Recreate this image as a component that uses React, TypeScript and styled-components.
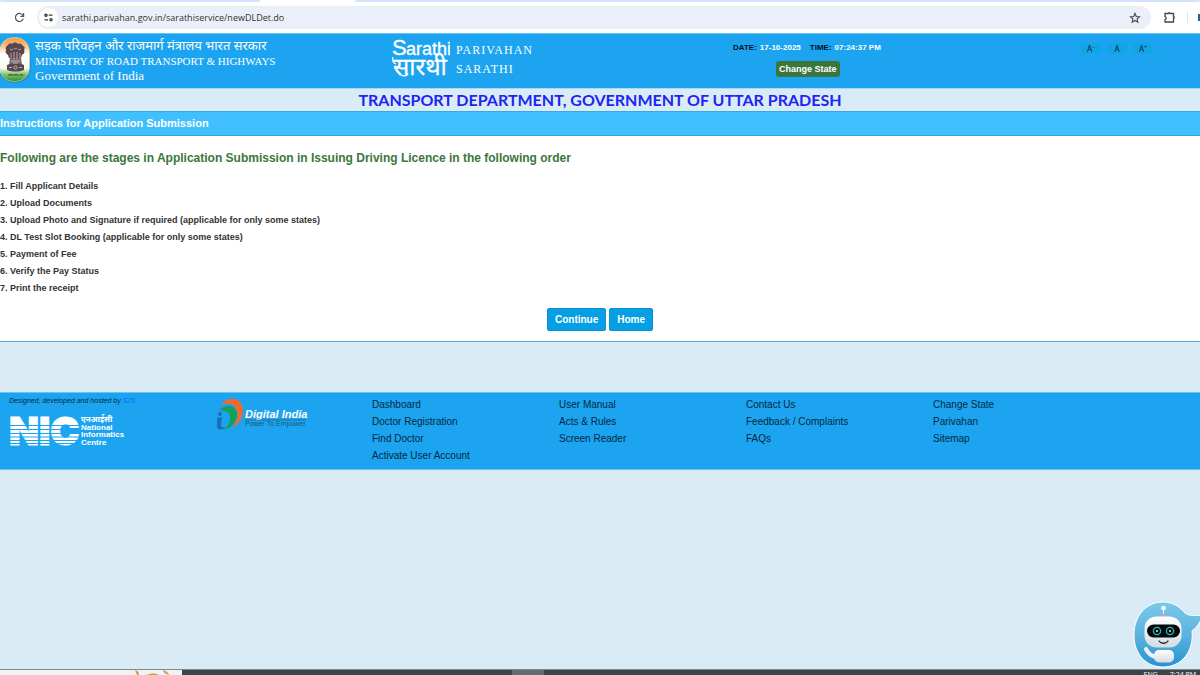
import React from "react";
import styled, { createGlobalStyle } from "styled-components";

const sans = `"Liberation Sans", Arial, sans-serif`;
const serif = `"Liberation Serif", "Times New Roman", serif`;

const Global = createGlobalStyle`
  *, *::before, *::after { box-sizing: border-box; }
  body { margin: 0; font-family: ${sans}; background: #d9ecf5; color: #333; }
  ul, ol, dl, dd, h1, h2, p { margin: 0; padding: 0; list-style: none; }
  a { color: inherit; text-decoration: none; }
  button { font: inherit; border: 0; cursor: pointer; }
  svg { display: block; }
`;

const Page = styled.div`
  display: flex;
  flex-direction: column;
  min-height: 100vh;
`;

/* Browser frame */
const TabStrip = styled.div`
  display: grid;
  grid-template-columns: 260fr 95fr 845fr;
  height: 2px;
  background: #fff;
`;
const TabEdge = styled.div<{ $active?: boolean }>`
  background: ${(p) => (p.$active ? "#fff" : "#d3e3fd")};
  border-radius: 0 0 3px 3px;
`;
const Toolbar = styled.div`
  display: flex;
  align-items: center;
  height: 31px;
  padding-left: 14px;
  background: #fff;
  overflow: hidden;
`;
const IconButton = styled.button`
  display: flex;
  flex: none;
  padding: 0;
  background: none;
`;
const AddressBar = styled.form`
  display: flex;
  flex: 1;
  align-items: center;
  gap: 4px;
  height: 23px;
  margin: 0 12px;
  padding: 0 10px 0 2px;
  border-radius: 12px;
  background: #ebeff9;
`;
const SiteInfo = styled(IconButton)`
  padding: 4px;
  border-radius: 50%;
  background: #fff;
`;
const AddressInput = styled.input`
  flex: 1;
  min-width: 0;
  padding: 0;
  border: 0;
  outline: 0;
  background: none;
  font: 9px/16px "Open Sans", "Noto Sans", sans-serif;
  color: #333;
`;
const ToolbarRule = styled.span`
  width: 1px;
  height: 11px;
  margin: 0 10px 0 11px;
  background: #d3e3fd;
`;
const ProfileDot = styled.span`
  width: 2px;
  height: 7px;
  background: #2b5f98;
`;

/* Site header */
const Header = styled.header`
  display: grid;
  grid-template-columns: 391fr 342fr 348fr 119fr;
  height: 55px;
  border-top: 1px solid #69c3f4;
  background: #1ca4f0;
`;
const Ministry = styled.div`
  display: flex;
  gap: 4px;
  padding-top: 3px;
`;
const MinistryText = styled.div`
  color: #fff;
  font: 11px/14px ${serif};
  white-space: nowrap;
`;
const HindiLine = styled.p`
  font: 13px/17px "Noto Sans", "Noto Sans Devanagari", "Lohit Devanagari", sans-serif;
`;
const GovLine = styled.p`
  font-size: 13px;
  line-height: 15px;
`;
const Brand = styled.div`
  display: flex;
  gap: 6px;
  padding-top: 3px;
`;
const BrandText = styled.div`
  padding-top: 4px;
  color: #fff;
  font: 12px/19px ${serif};
  letter-spacing: 1px;
`;
const Session = styled.div`
  display: flex;
  flex-direction: column;
  align-items: flex-start;
  padding-top: 8px;
  font-size: 8px;
  line-height: 11px;
  font-weight: 700;
`;
const Stamps = styled.dl`
  display: flex;
  gap: 9px;
`;
const Stamp = styled.div`
  display: flex;
  gap: 3px;
  color: #00131f;
`;
const StampValue = styled.dd`
  color: #fff;
`;
const ChangeState = styled.button`
  margin: 8px 0 0 43px;
  padding: 3px 3px 2px;
  border-radius: 3px;
  background: #3c763d;
  color: #fff;
  font-size: 9px;
  line-height: 11px;
`;
const FontSizes = styled.div`
  display: flex;
  align-items: flex-start;
  gap: 6px;
  padding-top: 9px;
`;
const FontSizeButton = styled.button`
  height: 11px;
  min-width: 20px;
  padding: 0 4px;
  border-radius: 3px;
  background: #12a5e6;
  color: #08243a;
  font: 8px/11px "Noto Sans", sans-serif;
`;

const Department = styled.h1`
  height: 23px;
  border-top: 1px solid #a5d9f5;
  color: #1f24f2;
  font: 700 16px/22px Lato, "Open Sans", sans-serif;
  text-align: center;
`;
const SectionBar = styled.h2`
  height: 25px;
  border-top: 1px solid #36a9ea;
  border-bottom: 1px solid #2fa6e2;
  background: #40c0ff;
  color: #fff;
  font-size: 11px;
  line-height: 23px;
`;
const Content = styled.main`
  padding: 14px 0 10px;
  border-bottom: 1px solid #45b1e4;
  background: #fff;
`;
const Lead = styled.p`
  color: #3c763d;
  font-size: 12px;
  line-height: 16px;
  font-weight: 700;
`;
const Stages = styled.ol`
  margin-top: 12px;
  font-size: 9px;
  line-height: 17px;
  font-weight: 700;
`;
const Actions = styled.div`
  display: flex;
  justify-content: center;
  gap: 3px;
  margin-top: 11px;
`;
const ActionButton = styled.button`
  padding: 6px 7px;
  border: 1px solid #0a92d3;
  border-radius: 2px;
  background: #079fe3;
  color: #fff;
  font-size: 10px;
  line-height: 9px;
  font-weight: 700;
`;

/* Footer */
const Footer = styled.footer`
  display: grid;
  grid-template-columns: 207fr 156fr 187fr 187fr 187fr 267fr;
  margin-top: 50px;
  padding: 3px 0 5px 9px;
  border-top: 1px solid #69c3f4;
  border-bottom: 1px solid #69c3f4;
  background: #1ca4f0;
`;
const Host = styled.div`
  display: grid;
  align-content: start;
  gap: 6px;
`;
const HostNote = styled.p`
  color: #03293f;
  font-size: 7px;
  line-height: 10px;
  font-style: italic;
`;
const HostLink = styled.a`
  color: #0d6bff;
`;
const FooterLinks = styled.ul`
  color: #03293f;
  font-size: 10px;
  line-height: 17px;
`;

const Chat = styled.button`
  position: fixed;
  right: 0;
  bottom: 5px;
  padding: 0;
  background: none;
`;
const Taskbar = styled.div`
  display: grid;
  grid-template-columns: 182fr 330fr 32fr 656fr;
  height: 6px;
  margin-top: auto;
  border-top: 1px solid #7d898b;
  background: #3b4547;
  overflow: hidden;
`;
const SearchBox = styled.div`
  padding-left: 135px;
  background: #f2f2f2;
`;
const ActiveTask = styled.div`
  grid-column: 3;
  background: #666b6d;
`;
const Tray = styled.div`
  display: flex;
  justify-content: flex-end;
  gap: 12px;
  padding-right: 4px;
  color: #fff;
  font: 7px/9px "Open Sans", sans-serif;
  white-space: nowrap;
`;

const ReloadIcon = () => (
  <svg width="11" height="11" viewBox="0 0 11 11" fill="none" stroke="#555" strokeWidth="1.2">
    <path d="M9 3.6A4 4 0 1 0 9.3 6.6" />
    <path d="M9.6 1v3.3H6.3" />
  </svg>
);
const TuneIcon = () => (
  <svg width="11" height="11" viewBox="0 0 11 11" fill="none" stroke="#3a3a3a" strokeWidth="1.3">
    <circle cx="3" cy="3.2" r="1.1" />
    <path d="M5.8 3.2H9.5M1.500 7.8h3.500" />
    <circle cx="8" cy="7.8" r="1.1" />
  </svg>
);
const StarIcon = () => (
  <svg width="12" height="12" viewBox="0 0 12 12" fill="none" stroke="#454545" strokeWidth="1.1">
    <path d="M6 1.500l1.300 3 3.200.3-2.400 2.200.7 3.200L6 8.500l-2.800 1.700.7-3.200L1.500 4.800l3.200-.3z" />
  </svg>
);
const ExtensionIcon = () => (
  <svg width="13" height="13" viewBox="0 0 13 13" fill="none" stroke="#454545" strokeWidth="1.300">
    <path d="M2 2.500h3.200c0-1.200 1.800-1.200 1.800 0H10.500v3c1 0 1 1.900 0 1.900v3.600H2V8.600c1.600-.2 1.600-2.700 0-2.900z" />
  </svg>
);

const Emblem = () => (
  <svg width="31" height="46" viewBox="0 0 31 46" role="img" aria-label="State Emblem of India">
    <defs>
      <linearGradient id="flag" x1="0" y1="0" x2="0" y2="1">
        <stop offset="0" stopColor="#f6973a" />
        <stop offset=".2" stopColor="#f9c48c" />
        <stop offset=".38" stopColor="#fff" />
        <stop offset=".7" stopColor="#f4faf0" />
        <stop offset=".84" stopColor="#7fc368" />
        <stop offset="1" stopColor="#249333" />
      </linearGradient>
    </defs>
    <rect x="-1" y="1" width="31.500" height="44.500" rx="14" fill="#2a6c8a" opacity=".6" />
    <rect x="-.5" y=".5" width="30" height="44" rx="14" fill="url(#flag)" stroke="#e8dfa9" strokeWidth=".6" />
    <g fill="#59464f">
      <path d="M8 8c1-2 3-2 4-1 1-2 5-2 6 0 2-1 4 0 5 2 2 0 2 3 1 4 1 2 0 4-2 5l-1 3H9l-1-3c-2-1-3-3-2-5-1-2 0-4 2-5z" />
      <path d="M10 21h11l1 7H9z" opacity=".8" />
      <path d="M7 28c5-2 12-2 17 0v5c-5 2-12 2-17 0z" />
      <path d="M8 37.500l3-.6 2 .8 3-.8 3 .8 4-.6v1.300H8z" />
    </g>
    <g stroke="#e5d6cc" strokeWidth=".7" fill="none">
      <path d="M10 12c1 1 2 1 3 0M14 11c1 1 2 1 3 0M18 12c1 1 2 1 3 0M11 16v5M14 15v7M17 15v7M20 16v5M11 24h9M13 26h5" />
      <circle cx="15.500" cy="30.500" r="1.600" />
      <path d="M9 30.500h3M19 30.500h3" />
    </g>
  </svg>
);

const SarathiLogo = () => (
  <svg width="59" height="44" viewBox="0 0 59 44" fill="#fff" stroke="#fff" strokeWidth=".3" role="img" aria-label="Sarathi">
    <text x="1" y="18" fontFamily="Liberation Sans" fontSize="22">S</text>
    <text x="15" y="18" fontFamily="Liberation Sans" fontSize="18">arathi</text>
    <text x="2" y="38" fontFamily="Noto Sans, Noto Sans Devanagari, sans-serif" fontSize="24">सारथी</text>
    <path d="M2 20c-1 3 0 6 3 7M8 35c2 5 8 5 9 1" fill="none" strokeWidth="1.200" />
  </svg>
);

const NicLogo = () => (
  <svg width="122" height="36" viewBox="0 0 122 36" fill="#fff" role="img" aria-label="National Informatics Centre">
    <text x="0" y="33" fontFamily="Inter, Liberation Sans" fontWeight="900" fontSize="39" stroke="#fff" strokeWidth="1">NIC</text>
    <path d="M0 13.500h70M0 17.500h70M0 21.500h70M0 25h70M0 28.500h70M0 31.500h70" stroke="#1ca4f0" strokeWidth="1" />
    <g fontFamily="Liberation Sans" fontWeight="700" fontSize="8">
      <text x="72" y="10" fontFamily="Noto Sans, Noto Sans Devanagari, sans-serif">एनआईसी</text>
      <text x="72" y="18">National</text>
      <text x="72" y="25">Informatics</text>
      <text x="72" y="33">Centre</text>
    </g>
  </svg>
);

const DigitalIndiaLogo = () => (
  <svg width="94" height="37" viewBox="0 -2 94 37" role="img" aria-label="Digital India, Power To Empower">
    <path d="M5 7C11-2 26-2 27 12c0 9-5 15-11 18 5-6 7-12 5-17C19 6 13 4 5 7z" fill="#f26a2b" />
    <path d="M3 13c5-7 17-7 18 3 0 8-6 15-14 16 5-3 7-8 7-12 0-6-5-9-11-7z" fill="#14a05a" />
    <circle cx="4" cy="16" r="2" fill="#1b6fb8" />
    <path d="M1 20l5-1-1 8c0 2 2 3 5 2-4 4-10 3-9-2z" fill="#1b6fb8" />
    <text x="29" y="20" fill="#fff" fontFamily="Liberation Sans" fontStyle="italic" fontWeight="700" fontSize="11">Digital India</text>
    <path d="M29 22h61" stroke="#385b70" strokeWidth=".8" />
    <text x="29" y="28" fill="#19577c" fontFamily="Liberation Sans" fontSize="7">Power To Empower</text>
  </svg>
);

const Robot = () => (
  <svg width="67" height="70" viewBox="0 0 67 70">
    <defs>
      <linearGradient id="bubble" x1="0" y1="0" x2="0" y2="1">
        <stop offset="0" stopColor="#7cc8ea" />
        <stop offset=".5" stopColor="#5bb4df" />
        <stop offset="1" stopColor="#2593d2" />
      </linearGradient>
      <linearGradient id="shell" x1="0" y1="0" x2="0" y2="1">
        <stop offset="0" stopColor="#fff" />
        <stop offset="1" stopColor="#d5dbe3" />
      </linearGradient>
    </defs>
    <path d="M30 2c9 0 16 4 21 10 4 4 9 4 18 3-1 7-5 12-10 16 2 20-10 36-29 36C12 67 1 53 1 35S12 2 30 2z" fill="url(#bubble)" stroke="#fff" strokeWidth="1" />
    <path d="M30.500 8v7" stroke="#eef4f8" strokeWidth="1" />
    <circle cx="30.500" cy="8" r="2.300" fill="#fff" />
    <path d="M26 17c0-4 9-4 9 0z" fill="#a4b1bd" />
    <rect x="11.500" y="16.500" width="37" height="31" rx="12" fill="url(#shell)" />
    <rect x="14" y="24.500" width="33" height="13" rx="6.500" fill="#05090d" />
    <g fill="none" stroke="#29b8b5" strokeWidth="1.300">
      <circle cx="24" cy="31" r="3.600" /><circle cx="37" cy="31" r="3.600" />
    </g>
    <circle cx="24" cy="31" r="1" fill="#9ff" /><circle cx="37" cy="31" r="1" fill="#9ff" />
    <path d="M26 41c2 3 7 3 9 0" fill="none" stroke="#222" strokeWidth="1.300" strokeLinecap="round" />
    <path d="M13 49c2 4 5 7 10 8" fill="none" stroke="#eef1f6" strokeWidth="4" strokeLinecap="round" />
    <rect x="21" y="50" width="20" height="12.500" rx="5" fill="url(#shell)" />
  </svg>
);

const SearchArt = () => (
  <svg width="42" height="5" viewBox="0 0 42 5" fill="#d99a45">
    <path d="M0 0l4 5H2zM0 0c3 1 4 2 4 5zM12 5c3-2 9-2 12 0zM28 0c0 2 2 4 6 5-1-3-3-4-6-5z" />
  </svg>
);

const stages = [
  "Fill Applicant Details",
  "Upload Documents",
  "Upload Photo and Signature if required (applicable for only some states)",
  "DL Test Slot Booking (applicable for only some states)",
  "Payment of Fee",
  "Verify the Pay Status",
  "Print the receipt",
];

const footerColumns = [
  ["Dashboard", "Doctor Registration", "Find Doctor", "Activate User Account"],
  ["User Manual", "Acts & Rules", "Screen Reader"],
  ["Contact Us", "Feedback / Complaints", "FAQs"],
  ["Change State", "Parivahan", "Sitemap"],
];

export default function App() {
  return (
    <Page>
      <Global />
      <TabStrip>
        <TabEdge />
        <TabEdge $active />
        <TabEdge />
      </TabStrip>
      <Toolbar>
        <IconButton aria-label="Reload"><ReloadIcon /></IconButton>
        <AddressBar>
          <SiteInfo type="button" aria-label="Site information"><TuneIcon /></SiteInfo>
          <AddressInput aria-label="Address" defaultValue="sarathi.parivahan.gov.in/sarathiservice/newDLDet.do" />
          <IconButton type="button" aria-label="Bookmark"><StarIcon /></IconButton>
        </AddressBar>
        <IconButton aria-label="Extensions"><ExtensionIcon /></IconButton>
        <ToolbarRule />
        <ProfileDot />
      </Toolbar>

      <Header>
        <Ministry>
          <Emblem />
          <MinistryText>
            <HindiLine lang="hi">सड़क परिवहन और राजमार्ग मंत्रालय भारत सरकार</HindiLine>
            <p>MINISTRY OF ROAD TRANSPORT &amp; HIGHWAYS</p>
            <GovLine>Government of India</GovLine>
          </MinistryText>
        </Ministry>
        <Brand>
          <SarathiLogo />
          <BrandText>
            <p>PARIVAHAN</p>
            <p>SARATHI</p>
          </BrandText>
        </Brand>
        <Session>
          <Stamps>
            <Stamp><dt>DATE:</dt><StampValue>17-10-2025</StampValue></Stamp>
            <Stamp><dt>TIME:</dt><StampValue>07:24:37 PM</StampValue></Stamp>
          </Stamps>
          <ChangeState>Change State</ChangeState>
        </Session>
        <FontSizes>
          <FontSizeButton aria-label="Smaller text">A⁻</FontSizeButton>
          <FontSizeButton aria-label="Normal text">A</FontSizeButton>
          <FontSizeButton aria-label="Larger text">A⁺</FontSizeButton>
        </FontSizes>
      </Header>

      <Department>TRANSPORT DEPARTMENT, GOVERNMENT OF UTTAR PRADESH</Department>
      <SectionBar>Instructions for Application Submission</SectionBar>
      <Content>
        <Lead>Following are the stages in Application Submission in Issuing Driving Licence in the following order</Lead>
        <Stages>
          {stages.map((stage, i) => (
            <li key={stage}>{`${i + 1}. ${stage}`}</li>
          ))}
        </Stages>
        <Actions>
          <ActionButton>Continue</ActionButton>
          <ActionButton>Home</ActionButton>
        </Actions>
      </Content>

      <Footer>
        <Host>
          <HostNote>Designed, developed and hosted by <HostLink href="#">S26</HostLink></HostNote>
          <NicLogo />
        </Host>
        <DigitalIndiaLogo />
        {footerColumns.map((links) => (
          <FooterLinks key={links[0]}>
            {links.map((label) => (
              <li key={label}><a href="#">{label}</a></li>
            ))}
          </FooterLinks>
        ))}
      </Footer>

      <Chat aria-label="Open chat assistant"><Robot /></Chat>
      <Taskbar>
        <SearchBox><SearchArt /></SearchBox>
        <ActiveTask />
        <Tray><span>ENG</span><span>7:24 PM</span></Tray>
      </Taskbar>
    </Page>
  );
}
